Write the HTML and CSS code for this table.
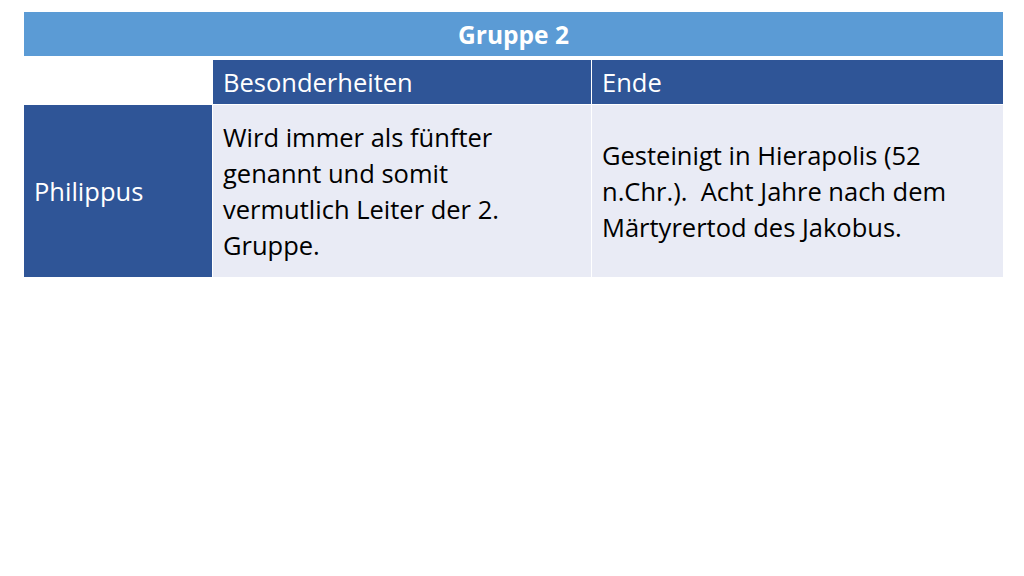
FILE: index.html
```html
<!DOCTYPE html>
<html lang="de">
<head>
<meta charset="utf-8">
<title>Gruppe 2</title>
<link rel="stylesheet" href="styles.css">
</head>
<body>
<div class="slide">
  <div class="table">
    <div class="cell head">Gruppe 2</div>
    <div class="cell blank"></div>
    <div class="cell colhead">Besonderheiten</div>
    <div class="cell colhead">Ende</div>
    <div class="cell rowhead">Philippus</div>
    <div class="cell body top">Wird immer als fünfter<br>genannt und somit<br>vermutlich Leiter der 2.<br>Gruppe.</div>
    <div class="cell body mid">Gesteinigt in Hierapolis (52<br>n.Chr.).&nbsp; Acht Jahre nach dem<br>Märtyrertod des Jakobus.</div>
  </div>
</div>
</body>
</html>
```
FILE: styles.css
```css
html, body {
  margin: 0;
  padding: 0;
  background: #ffffff;
}
.slide {
  width: 1024px;
  height: 576px;
  padding: 12px 0 0 24px;
  box-sizing: border-box;
  font-family: "Open Sans", Lato, sans-serif;
}
.table {
  width: 979px;
  display: grid;
  grid-template-columns: 188px 378px 411px;
  grid-template-rows: 44px 49px 172px;
  column-gap: 1px;
}
.cell {
  box-sizing: border-box;
  display: flex;
  align-items: center;
  padding: 0 10px;
  font-size: 25.5px;
  line-height: 36px;
}
.head {
  grid-column: 1 / 4;
  background: #5b9bd5;
  color: #ffffff;
  font-weight: bold;
  justify-content: center;
  margin-bottom: 4px;
  height: 44px;
  font-size: 24.5px;
  padding-top: 1px;
}
.blank {
  background: transparent;
  margin-top: 4px;
}
.colhead {
  background: #2f5597;
  color: #ffffff;
  margin-top: 4px;
  margin-bottom: 1px;
}
.rowhead {
  background: #2f5597;
  color: #ffffff;
}
.body {
  background: #e9ebf5;
  color: #000000;
}
.top {
  align-items: flex-start;
  padding-top: 14px;
}
```
